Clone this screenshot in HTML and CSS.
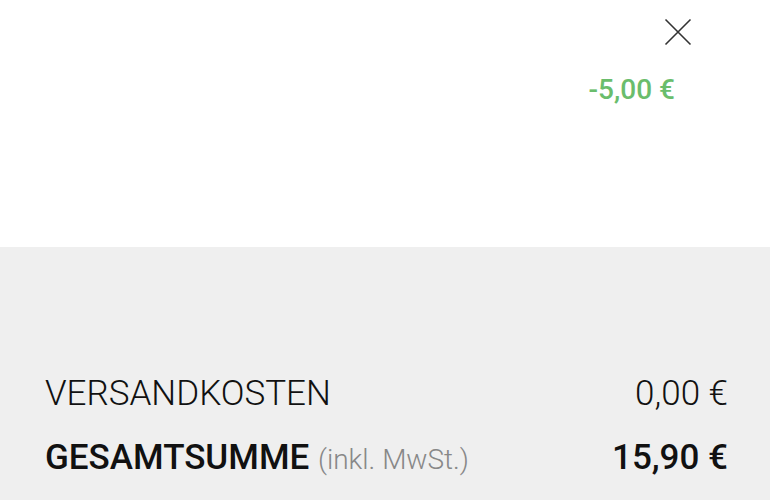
FILE: index.html
```html
<!DOCTYPE html>
<html lang="de">
<head>
    <meta charset="UTF-8">
    <meta name="viewport" content="width=device-width, initial-scale=1.0">
    <title>Warenkorb</title>
    <link rel="stylesheet" href="styles.css">
</head>
<body>
    <div class="cart-item">
        <div class="item-actions">
            <button class="remove-btn" aria-label="Entfernen">
                <svg width="28" height="28" viewBox="0 0 28 28">
                    <path d="M1.5 1.5 L26.5 26.5 M26.5 1.5 L1.5 26.5" stroke="#333" stroke-width="1.6" fill="none"/>
                </svg>
            </button>
            <span class="discount">-5,00 €</span>
        </div>
    </div>

    <div class="summary">
        <div class="summary-row">
            <span class="label">VERSANDKOSTEN</span>
            <span class="value">0,00 €</span>
        </div>
        <div class="summary-row total">
            <span class="label">GESAMTSUMME <small>(inkl. MwSt.)</small></span>
            <span class="value">15,90 €</span>
        </div>
    </div>
</body>
</html>
```

FILE: styles.css
```css
/* styles.css */

body {
    margin: 0;
    font-family: Roboto, "Liberation Sans", sans-serif;
    background-color: #fff;
    color: #111;
}

.cart-item {
    height: 247px;
    background-color: #fff;
}

.item-actions {
    display: flex;
    flex-direction: column;
    align-items: flex-end;
    padding: 18px 95px 0 0;
}

.remove-btn {
    background: none;
    border: none;
    padding: 0;
    margin-right: -17px;
    width: 28px;
    height: 28px;
    cursor: pointer;
}

.discount {
    margin-top: 27px;
    color: #6abd6c;
    font-size: 28px;
    font-weight: 500;
}

.summary {
    background-color: #efefef;
    height: 253px;
    padding: 126px 42px 0 45px;
    box-sizing: border-box;
}

.summary-row {
    display: flex;
    justify-content: space-between;
    align-items: baseline;
}

.summary-row .label,
.summary-row .value {
    font-size: 35px;
    font-weight: 300;
}

.summary-row.total {
    margin-top: 23px;
}

.summary-row.total .label,
.summary-row.total .value {
    font-weight: 500;
}

.summary-row small {
    font-size: 28px;
    font-weight: 300;
    color: #888;
}
```
